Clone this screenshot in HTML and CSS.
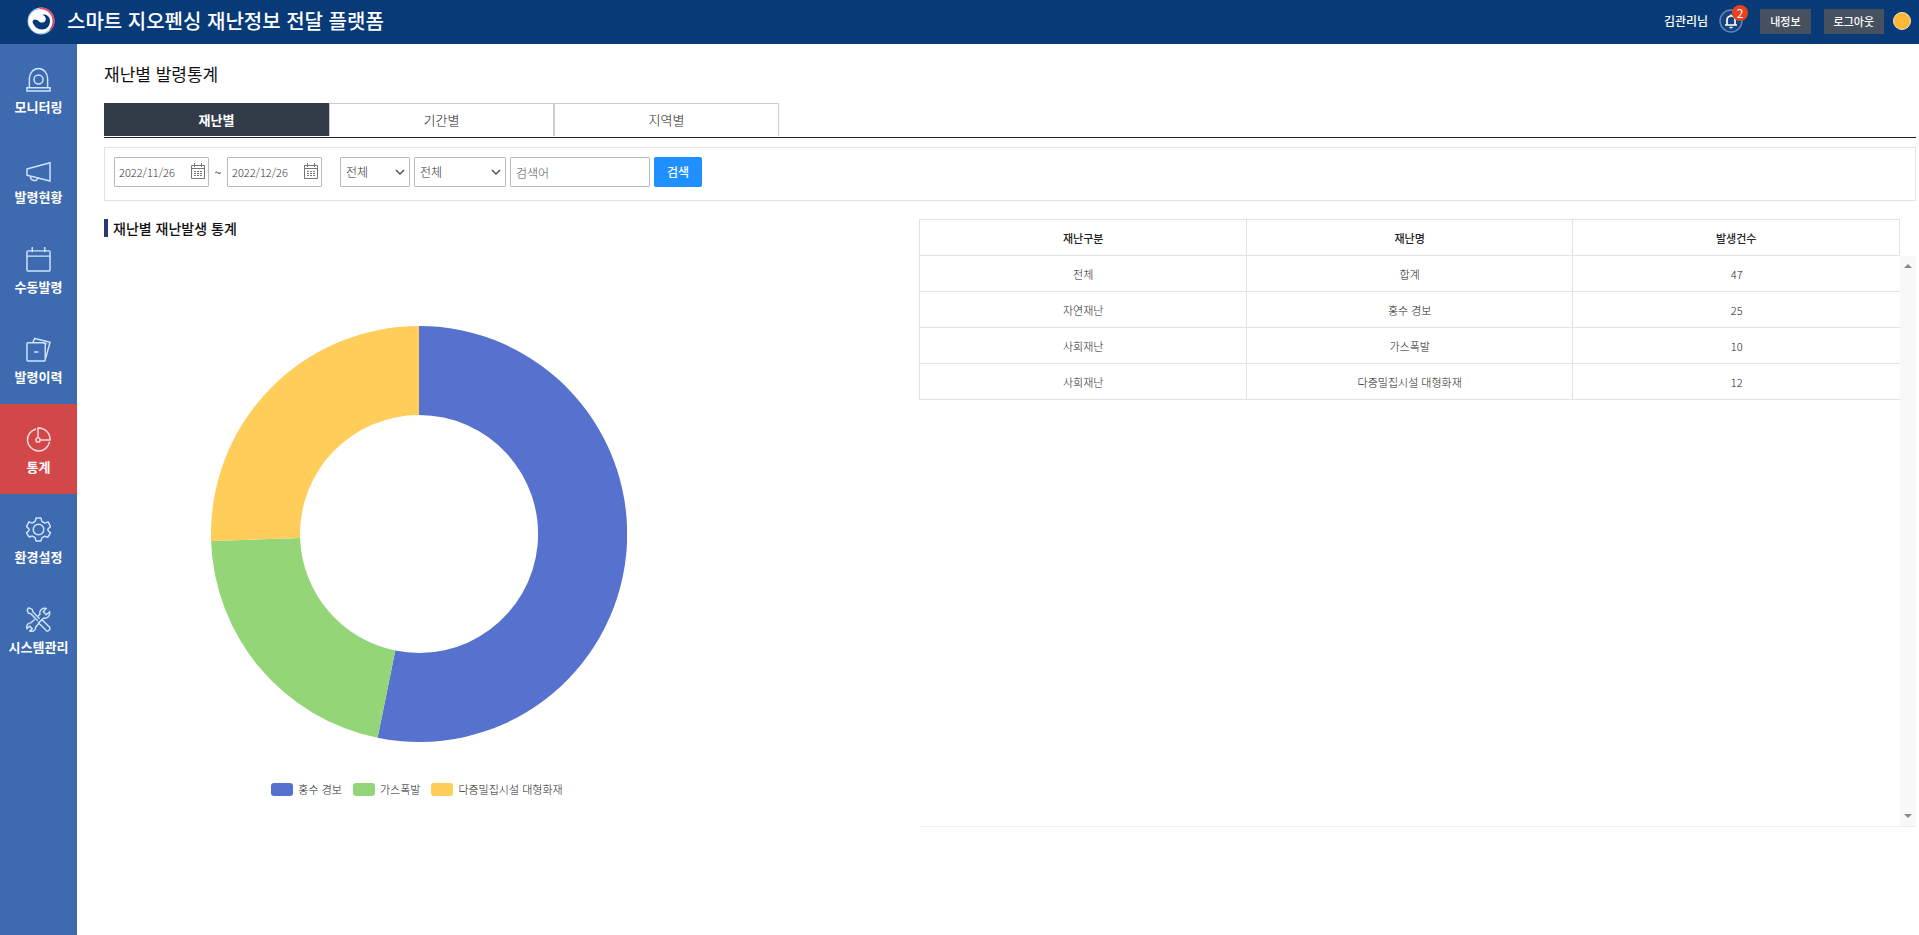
FILE: index.html
```html
<!DOCTYPE html>
<html lang="ko">
<head>
<meta charset="utf-8">
<title>스마트 지오펜싱 재난정보 전달 플랫폼</title>
<link rel="stylesheet" href="styles.css">
</head>
<body>
<header class="topbar">
  <a class="brand" href="#">
    <svg class="brand-logo" viewBox="0 0 28 28" aria-hidden="true">
      <circle cx="14" cy="14" r="13.500" fill="#9cc4ea"/>
      <path d="M12 .6A13.500 13.500 0 0 1 23 24L21 9z" fill="#d9425f"/>
      <path d="M12 .6A13.500 13.500 0 0 1 27.500 14L20 8z" fill="#e0506c"/>
      <circle cx="13.500" cy="14.300" r="12" fill="#fff"/>
      <path d="M5.500 15c.2-1.500 1-2.600 2.500-2.600 3.500 0 4 3.200 7 3.200 2.500 0 4.500-2.200 3.500-5.100C17.800 8.600 16 8 14.500 8c3.500-1.800 8.500.5 8.500 6 0 5-3.500 8.500-8 8.500-4.500-.1-8-3-9.500-7.500z" fill="#083a78"/>
    </svg>
    <span class="brand-name">스마트 지오펜싱 재난정보 전달 플랫폼</span>
  </a>
  <div class="user-area">
    <span class="user-name">김관리님</span>
    <button class="bell" type="button" aria-label="알림">
      <svg viewBox="0 0 24 24" aria-hidden="true">
        <circle cx="12" cy="12" r="11" fill="#15457f" stroke="#5f86b5" stroke-width="1.500"/>
        <path d="M6 16h12M8 16v-5a4 4 0 0 1 8 0v5M12 7V5.500M10.500 18.500h3" fill="none" stroke="#fff" stroke-width="1.700"/>
      </svg>
      <span class="badge">2</span>
    </button>
    <button class="top-button" type="button">내정보</button>
    <button class="top-button" type="button">로그아웃</button>
    <span class="status-dot"></span>
  </div>
</header>
<div class="shell">
  <nav class="sidebar">
    <a class="nav-item" href="#">
      <svg viewBox="0 0 26 26" aria-hidden="true"><path d="M3.500 21.500V12a9.500 10.500 0 0 1 19 0v9.500M1 21.500h24V25H1z"/><circle cx="13" cy="13" r="4.700"/></svg>
      모니터링
    </a>
    <a class="nav-item" href="#">
      <svg viewBox="0 0 26 26" aria-hidden="true"><path d="M1 12.500 25 6v19L1 19zM4.500 20c0 5.500 8 5.500 7.500 2"/></svg>
      발령현황
    </a>
    <a class="nav-item" href="#">
      <svg viewBox="0 0 26 26" aria-hidden="true"><path d="M2 4h22a1 1 0 0 1 1 1v19a1 1 0 0 1-1 1H2a1 1 0 0 1-1-1V5a1 1 0 0 1 1-1zM1 9.500h24M6.500 0v5.500M19.500 0v5.500"/></svg>
      수동발령
    </a>
    <a class="nav-item" href="#">
      <svg viewBox="0 0 26 26" aria-hidden="true"><path d="M2 6h17a1 1 0 0 1 1 1v17a1 1 0 0 1-1 1H2a1 1 0 0 1-1-1V7a1 1 0 0 1 1-1zM7 6l2-4.500L25 5.500 20.500 22M8.500 15.500h4.500M18 6l3.500 1.500"/></svg>
      발령이력
    </a>
    <a class="nav-item nav-item-active" href="#" aria-current="page">
      <svg viewBox="0 0 26 26" aria-hidden="true"><path d="M10.500 2A11.600 11.600 0 1 0 24.500 15.500M12.500 11.500V1A12 12 0 0 1 25 13.500H15"/><circle cx="12.500" cy="13.500" r="2.200"/></svg>
      통계
    </a>
    <a class="nav-item" href="#">
      <svg viewBox="0 0 26 26" aria-hidden="true"><path stroke-linejoin="round" d="M10.500 1h5l1 3.600 3 1.700L23 5l2.500 5-2.700 2.500v1.500l2.700 2.500-2.800 4.500-3.300-1-2.900 1.700L15.500 25h-5l-1-3.500-2.900-1.700-3.300 1L.5 16.500 3.200 14v-1.500L.5 10 3 5l3.500 1.300 3-1.700z"/><circle cx="13" cy="13" r="5.500"/></svg>
      환경설정
    </a>
    <a class="nav-item" href="#">
      <svg viewBox="0 0 26 26" aria-hidden="true"><path d="m1 3 2-2 3.500 1.500.7 2.700 7 7M1 3l1.500 3.500 2.700.7 7 7M14.500 15l2-2 8 8c1.500 2-1.500 5-3.500 3.500l-8-8zM11.500 10.500 14.500 7.500C13.500 3.500 17 .5 21 1.500l-3 3.500 3 3 3.500-3c1 4-2.500 7.500-6 6.500l-3 3M9 13l-4 3.500c-3 0-5 3-4 6l3-2.500 2.500 2.500L4 25c3 1 6.500-1 6-4l3-3.500"/></svg>
      시스템관리
    </a>
  </nav>
  <main class="content">
    <h1 class="page-title">재난별 발령통계</h1>
    <div class="tabs" role="tablist">
      <button class="tab tab-active" type="button" role="tab" aria-selected="true">재난별</button>
      <button class="tab" type="button" role="tab" aria-selected="false">기간별</button>
      <button class="tab" type="button" role="tab" aria-selected="false">지역별</button>
    </div>
    <form class="filters">
      <div class="date-range">
        <label class="date-field">
          <input type="text" value="2022/11/26" aria-label="시작일">
          <svg viewBox="0 0 14 16" aria-hidden="true"><path d="M.5 2.500h13v13H.5zM.5 5.500h13M3.500 0v4M10.500 0v4"/><path d="M3 8.500h8M3 10.500h8M3 12.500h8" stroke-dasharray="2 1"/></svg>
        </label>
        <span class="tilde">~</span>
        <label class="date-field">
          <input type="text" value="2022/12/26" aria-label="종료일">
          <svg viewBox="0 0 14 16" aria-hidden="true"><path d="M.5 2.500h13v13H.5zM.5 5.500h13M3.500 0v4M10.500 0v4"/><path d="M3 8.500h8M3 10.500h8M3 12.500h8" stroke-dasharray="2 1"/></svg>
        </label>
      </div>
      <span class="select-field select-small">
        <select aria-label="재난구분"><option>전체</option></select>
        <svg viewBox="0 0 10 6" aria-hidden="true"><path d="m1 1 4 4 4-4"/></svg>
      </span>
      <span class="select-field select-large">
        <select aria-label="재난명"><option>전체</option></select>
        <svg viewBox="0 0 10 6" aria-hidden="true"><path d="m1 1 4 4 4-4"/></svg>
      </span>
      <input class="keyword" type="text" placeholder="검색어" aria-label="검색어">
      <button class="search" type="button">검색</button>
    </form>
    <div class="panels">
      <section class="chart-panel">
        <h2 class="section-title">재난별 재난발생 통계</h2>
        <figure class="chart">
          <svg class="donut" viewBox="-208 -208 416 416" role="img" aria-label="재난별 재난발생 통계">
            <path fill="#5672ce" d="M0-208A208 208 0 1 1-41.400 203.800L-23.700 116.600A119 119 0 1 0 0-119z"/>
            <path fill="#94d578" d="M-41.400 203.800A208 208 0 0 1-207.900 6.900L-118.900 4A119 119 0 0 0-23.700 116.600z"/>
            <path fill="#fecd5a" d="M-207.900 6.900A208 208 0 0 1 0-208V-119A119 119 0 0 0-118.900 4z"/>
          </svg>
          <figcaption class="legend">
            <span class="legend-item"><i class="swatch swatch-flood"></i>홍수 경보</span>
            <span class="legend-item"><i class="swatch swatch-gas"></i>가스폭발</span>
            <span class="legend-item"><i class="swatch swatch-fire"></i>다중밀집시설 대형화재</span>
          </figcaption>
        </figure>
      </section>
      <section class="table-panel">
        <table class="stats">
          <thead>
            <tr><th>재난구분</th><th>재난명</th><th>발생건수</th></tr>
          </thead>
          <tbody>
            <tr><td>전체</td><td>합계</td><td>47</td></tr>
            <tr><td>자연재난</td><td>홍수 경보</td><td>25</td></tr>
            <tr><td>사회재난</td><td>가스폭발</td><td>10</td></tr>
            <tr><td>사회재난</td><td>다중밀집시설 대형화재</td><td>12</td></tr>
          </tbody>
        </table>
        <div class="scroll-track" aria-hidden="true">
          <svg viewBox="0 0 8 4"><path d="M0 4 4 0l4 4z"/></svg>
          <svg viewBox="0 0 8 4"><path d="m0 0 4 4 4-4z"/></svg>
        </div>
      </section>
    </div>
  </main>
</div>
</body>
</html>
```

FILE: styles.css
```css
* {
  box-sizing: border-box;
}

body {
  margin: 0;
  min-height: 100vh;
  display: flex;
  flex-direction: column;
  background: #fff;
  color: #222;
  font-family: "Noto Sans CJK KR", sans-serif;
  font-size: 12px;
  line-height: 16px;
}

button,
input,
select {
  font: inherit;
  color: inherit;
}

button {
  border: 0;
  padding: 0;
  cursor: pointer;
}

a {
  color: inherit;
  text-decoration: none;
}

/* Top bar */
.topbar {
  display: flex;
  justify-content: space-between;
  align-items: center;
  height: 44px;
  padding: 0 8px 2px 27px;
  background: #083a78;
  color: #fff;
}

.brand {
  display: flex;
  align-items: center;
  gap: 12px;
}

.brand-logo {
  width: 28px;
  height: 28px;
}

.brand-name {
  font-size: 20px;
  line-height: 28px;
  font-weight: 500;
}

.user-area {
  display: flex;
  align-items: center;
}

.user-name {
  font-weight: 500;
  margin-right: 11px;
}

.bell {
  position: relative;
  width: 24px;
  height: 24px;
  margin-right: 17px;
  background: none;
}

.bell svg {
  display: block;
}

.badge {
  position: absolute;
  top: -4px;
  right: -5px;
  width: 16px;
  height: 16px;
  border-radius: 50%;
  background: #e8411c;
  font-size: 12px;
  line-height: 16px;
}

.top-button {
  height: 25px;
  padding: 0 10px;
  margin-right: 13px;
  background: #46505f;
  font-size: 11px;
  font-weight: 500;
}

.status-dot {
  width: 18px;
  height: 18px;
  margin-left: -4px;
  border: 1px solid #f7e3b5;
  border-radius: 50%;
  background: #fcb836;
}

/* Sidebar */
.shell {
  flex: 1;
  display: flex;
}

.sidebar {
  flex: 0 0 77px;
  background: #3e6aaf;
}

.nav-item {
  display: flex;
  flex-direction: column;
  align-items: center;
  gap: 7px;
  height: 90px;
  padding-top: 23px;
  color: #fff;
  font-size: 13px;
  font-weight: 700;
}

.nav-item svg {
  width: 25px;
  height: 25px;
  fill: none;
  stroke: #cfe5ff;
  stroke-width: 1.5;
}

.nav-item-active {
  background: #d24748;
}

.nav-item-active svg {
  stroke: #ffdcdc;
}

/* Content */
.content {
  flex: 1;
  min-width: 0;
  padding: 18px 3px 0 27px;
}

.page-title {
  margin: 0 0 17px;
  color: #111;
  font-size: 17px;
  line-height: 24px;
  font-weight: 400;
}

.tabs {
  display: flex;
  padding-bottom: 1px;
  border-bottom: 1px solid #222;
}

.tab {
  width: 225px;
  height: 33px;
  border: 1px solid #ccc;
  border-bottom: 0;
  background: #fff;
  font-size: 13px;
  font-weight: 300;
}

.tab-active {
  border-color: #323c48;
  background: #323c48;
  color: #fff;
  font-weight: 700;
}

.filters {
  display: flex;
  align-items: flex-start;
  gap: 4px;
  margin-top: 9px;
  padding: 9px 9px 13px;
  border: 1px solid #e3e3e3;
  color: #333;
  font-weight: 300;
}

.date-range {
  display: flex;
  align-items: center;
  margin-right: 14px;
}

.date-field,
.select-field {
  position: relative;
}

.date-field input,
.select-field select,
.keyword {
  display: block;
  width: 100%;
  height: 30px;
  margin: 0;
  padding: 0 5px;
  border: 1px solid #bbb;
  border-radius: 1px;
  background: #fff;
}

.date-field {
  width: 95px;
}

.date-field input {
  padding: 0 4px;
  font-size: 11px;
}

.date-field svg {
  position: absolute;
  top: 6px;
  right: 4px;
  width: 14px;
  height: 16px;
  fill: none;
  stroke: #777;
}

.tilde {
  width: 18px;
  text-align: center;
  font-weight: 400;
}

.select-field select {
  appearance: none;
}

.select-field svg {
  position: absolute;
  top: 12px;
  right: 5px;
  width: 10px;
  height: 6px;
  fill: none;
  stroke: #555;
  stroke-width: 1.5;
  pointer-events: none;
}

.select-small {
  width: 70px;
}

.select-large {
  width: 92px;
}

.filters .keyword {
  width: 140px;
}

.keyword::placeholder {
  color: #555;
}

.search {
  width: 48px;
  height: 30px;
  border-radius: 2px;
  background: #1e90ff;
  color: #fff;
  font-weight: 500;
}

/* Panels */
.panels {
  display: grid;
  grid-template-columns: 45fr 55fr;
  margin-top: 18px;
}

.section-title {
  margin: 0;
  padding-left: 5px;
  border-left: 4px solid #2b3a70;
  color: #111;
  font-size: 14px;
  line-height: 18px;
  font-weight: 500;
}

.chart {
  display: flex;
  flex-direction: column;
  align-items: center;
  gap: 39px;
  max-width: 630px;
  margin: 89px 0 0;
}

.donut {
  width: 416px;
  height: 416px;
}

.legend {
  display: flex;
  gap: 11px;
  padding-right: 4px;
  font-size: 11px;
  font-weight: 300;
}

.legend-item {
  display: flex;
  align-items: center;
  gap: 5px;
}

.swatch {
  width: 22px;
  height: 13px;
  border-radius: 3px;
}

.swatch-flood {
  background: #5672ce;
}

.swatch-gas {
  background: #94d578;
}

.swatch-fire {
  background: #fecd5a;
}

.table-panel {
  display: flex;
  align-items: flex-start;
  height: 608px;
  border-bottom: 1px solid #eee;
}

.stats {
  flex: 1;
  table-layout: fixed;
  border-collapse: separate;
  border-spacing: 0;
  border-top: 1px solid #e2e2e2;
  border-left: 1px solid #e2e2e2;
  font-size: 11px;
  text-align: center;
}

.stats th,
.stats td {
  width: 33%;
  height: 36px;
  padding: 0;
  border-right: 1px solid #e2e2e2;
  border-bottom: 1px solid #e2e2e2;
  font-weight: 300;
}

.stats th {
  font-weight: 500;
}

.stats td:last-child {
  border-right: 0;
}

.scroll-track {
  display: flex;
  flex-direction: column;
  justify-content: space-between;
  align-items: center;
  align-self: stretch;
  width: 16px;
  margin-top: 37px;
  padding: 8px 0;
  background: #f8f8f8;
}

.scroll-track svg {
  width: 8px;
  height: 4px;
  fill: #888;
}
```
